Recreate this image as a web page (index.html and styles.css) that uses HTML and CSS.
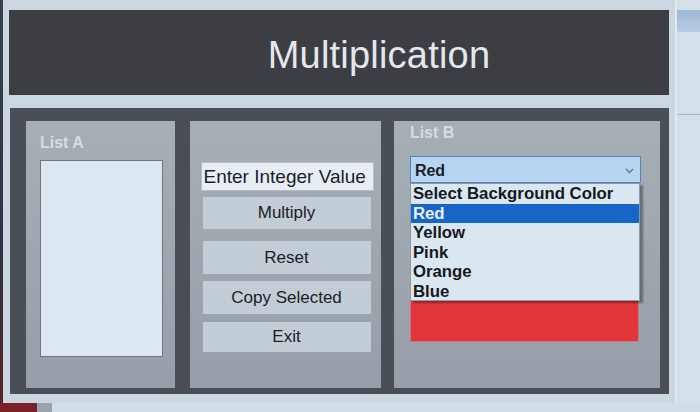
FILE: index.html
```html
<!DOCTYPE html>
<html>
<head>
<meta charset="utf-8">
<link rel="stylesheet" href="styles.css">
</head>
<body>
<div class="screen">
  <div class="edge"></div>
  <div class="window">
    <div class="header"><h1 class="title">Multiplication</h1></div>
    <div class="main">
      <div class="col col-a">
        <div class="label">List A</div>
        <div class="listbox"></div>
      </div>
      <div class="col col-mid">
        <div class="textfield">Enter Integer Value</div>
        <div class="btn btn-multiply">Multiply</div>
        <div class="btn btn-reset">Reset</div>
        <div class="btn btn-copy">Copy Selected</div>
        <div class="btn btn-exit">Exit</div>
      </div>
      <div class="col col-b">
        <div class="label label-b">List B</div>
        <div class="combo">
          <div class="select">
            <span>Red</span>
            <svg class="chev" width="9" height="6" viewBox="0 0 9 6"><path d="M1 1 L4.5 4.5 L8 1" fill="none" stroke="#5d7890" stroke-width="1.3"/></svg>
          </div>
          <div class="dropdown">
            <div class="opt">Select Background Color</div>
            <div class="opt opt-sel">Red</div>
            <div class="opt">Yellow</div>
            <div class="opt">Pink</div>
            <div class="opt">Orange</div>
            <div class="opt">Blue</div>
          </div>
        </div>
        <div class="swatch"></div>
      </div>
    </div>
  </div>
  <div class="desk">
    <div class="desk-band"></div>
    <div class="desk-line"></div>
  </div>
</div>
<div class="taskbar">
  <div class="tb-red"></div>
  <div class="tb-gray"></div>
</div>
</body>
</html>
```
FILE: styles.css
```css
* { box-sizing: border-box; }
html, body { margin: 0; padding: 0; }
body {
  width: 700px;
  height: 412px;
  overflow: hidden;
  background: #cdd8e2;
  font-family: "Liberation Sans", Arial, sans-serif;
}
.screen {
  display: flex;
  height: 403px;
}
.edge {
  width: 3px;
  background: linear-gradient(#3a3f48, #2e3440 60%, #5a2228);
}
.window {
  width: 674px;
  background: #cad6e0;
  padding: 10px 6px 0 6px;
  border-right: 2px solid #e2e9ef;
}
.header {
  height: 85px;
  background: #3d3e43;
  display: flex;
  align-items: center;
  justify-content: center;
  padding: 5px 0 0 80px;
}
.title {
  margin: 0;
  font-weight: normal;
  font-size: 38px;
  color: #e3e8ee;
  letter-spacing: 0.2px;
}
.main {
  margin: 13px 0 0 1px;
  height: 286px;
  background: #4a4f55;
  display: flex;
  padding: 13px 9px 0 16px;
}
.col {
  height: 267px;
  background: linear-gradient(#a6aeb6, #969ea7);
}
.col-a { width: 149px; padding: 13px 0 0 14px; }
.col-mid { width: 192px; margin-left: 15px; padding: 41px 0 0 11px; }
.col-b { width: 267px; margin-left: 13px; padding: 3px 0 0 16px; }
.label {
  font-weight: bold;
  font-size: 16px;
  line-height: 18px;
  color: #d6dce2;
}
.listbox {
  margin-top: 8px;
  width: 123px;
  height: 197px;
  background: #dde7ef;
  border: 1px solid #6f7881;
}
.textfield {
  width: 173px;
  height: 29px;
  background: #e8eef4;
  border: 1px solid #b5bfc8;
  font-size: 19px;
  line-height: 28px;
  padding-left: 2px;
  color: #1b1f24;
  white-space: nowrap;
}
.btn {
  width: 168px;
  margin-left: 2px;
  background: #c3cdd6;
  color: #1c2024;
  font-size: 17px;
  display: flex;
  align-items: center;
  justify-content: center;
}
.btn-multiply { margin-top: 6px; height: 32px; }
.btn-reset { margin-top: 12px; height: 33px; }
.btn-copy { margin-top: 7px; height: 33px; }
.btn-exit { margin-top: 8px; height: 30px; }
.combo {
  position: relative;
  margin-top: 14px;
  width: 231px;
}
.select {
  height: 27px;
  background: #b5d5f1;
  border: 1px solid #4f84c3;
  display: flex;
  align-items: center;
  justify-content: space-between;
  padding: 2px 6px 0 4px;
  font-weight: bold;
  font-size: 16px;
  color: #1a1e24;
}
.chev { margin-top: 1px; }
.dropdown {
  position: absolute;
  left: 0;
  top: 27px;
  width: 230px;
  height: 118px;
  background: #dae6f0;
  border: 1px solid #8b9aa8;
  box-shadow: 3px 2px 2px rgba(0, 0, 0, 0.35);
  z-index: 2;
}
.opt {
  height: 19.5px;
  line-height: 20px;
  padding-left: 2px;
  font-weight: bold;
  font-size: 16.8px;
  color: #15191e;
  white-space: nowrap;
}
.opt-sel {
  background: #1766c7;
  color: #eaf2fb;
}
.swatch {
  margin-top: 8px;
  width: 229px;
  height: 151px;
  background: #e1353a;
  border: 1px solid #c77a80;
}
.desk {
  flex: 1;
  background: #d5dfe7;
  padding-top: 10px;
}
.desk-band {
  height: 22px;
  background: linear-gradient(#9db9d6, #b7cbe0);
}
.desk-line {
  margin-top: 82px;
  height: 1px;
  background: #aab7c4;
}
.taskbar {
  height: 9px;
  display: flex;
  background: #d3dde5;
}
.tb-red { width: 37px; background: #7b1f28; }
.tb-gray { width: 15px; background: #9aa2aa; }
```
